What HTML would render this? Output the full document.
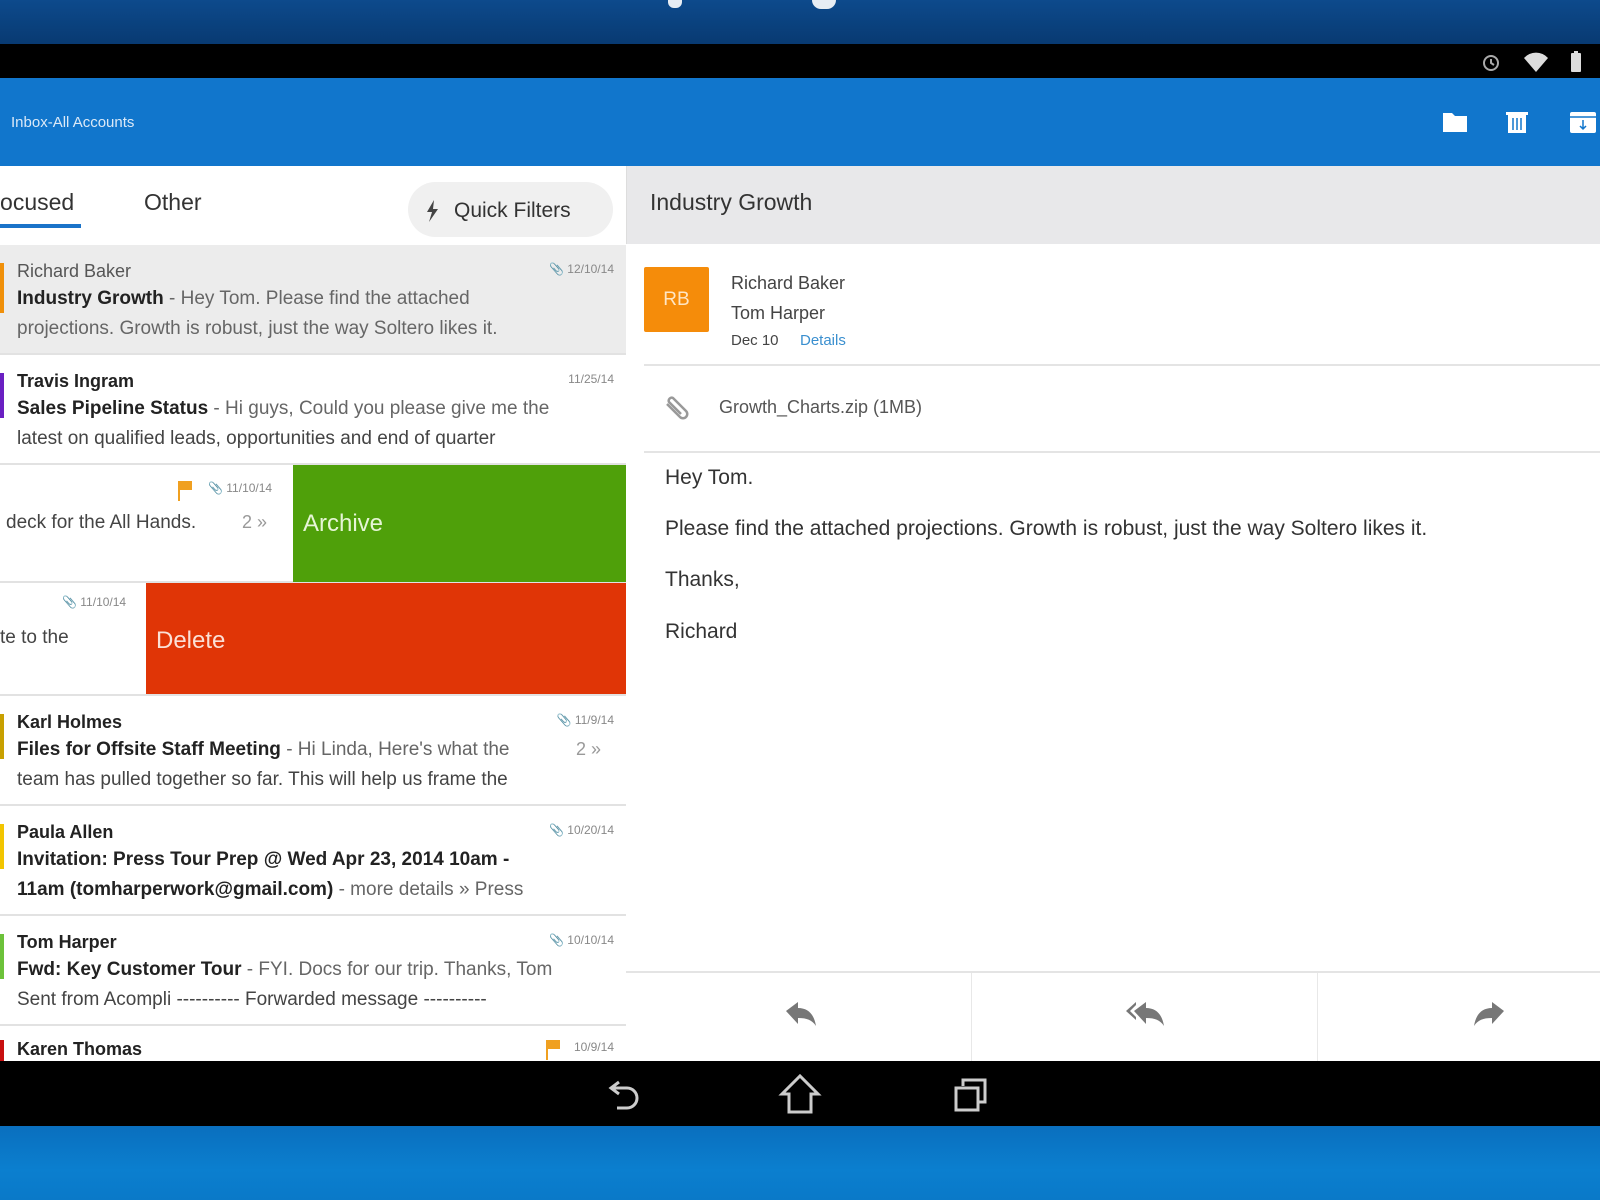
<!DOCTYPE html>
<html><head><meta charset="utf-8"><style>
*{margin:0;padding:0;box-sizing:border-box}
body{width:1600px;height:1200px;overflow:hidden;position:relative;font-family:"Liberation Sans",sans-serif;background:#fff}
.a{position:absolute;white-space:nowrap}
.top{left:0;top:0;width:1600px;height:44px;background:linear-gradient(#0d4a8c,#083a72)}
.sb{left:0;top:44px;width:1600px;height:34px;background:#000}
.tb{left:0;top:78px;width:1600px;height:88px;background:#1176cc}
.nav{left:0;top:1061px;width:1600px;height:65px;background:#000}
.bot{left:0;top:1126px;width:1600px;height:74px;background:linear-gradient(#0a6fbe,#0b7fcf 60%,#0a79c8)}
.row{position:absolute;left:0;width:626px;border-bottom:2px solid #e2e2e2;background:#fff}
.n{position:absolute;left:17px;font-size:18px;color:#222}
.s{position:absolute;left:17px;font-size:19px;color:#666}
.s b{color:#222}
.d{position:absolute;right:12px;font-size:12px;color:#888}
.bar{position:absolute;left:0;width:4px}
</style></head><body>
<div class="a top"></div>
<div class="a" style="left:668px;top:0;width:14px;height:8px;background:#fff;border-radius:0 0 6px 6px;opacity:.9"></div>
<div class="a" style="left:812px;top:0;width:24px;height:9px;background:#fff;border-radius:0 0 10px 10px;opacity:.9"></div>
<div class="a sb"></div>
<svg class="a" style="left:1480px;top:50px" width="110" height="24" viewBox="0 0 110 24">
<circle cx="11" cy="13" r="7" fill="none" stroke="#aaa" stroke-width="2"/><path d="M11 9v4l3 2" stroke="#aaa" stroke-width="2" fill="none"/>
<path d="M44 8a16 16 0 0 1 24 0l-12 14z" fill="#ddd"/>
<rect x="91" y="3" width="10" height="19" rx="1" fill="#ddd"/><rect x="94" y="1" width="4" height="3" fill="#ddd"/>
</svg>
<div class="a tb"></div>
<div class="a" style="left:11px;top:114px;font-size:15px;color:#dbe9f7">Inbox-All Accounts</div>
<svg class="a" style="left:1440px;top:107px" width="160" height="30" viewBox="0 0 160 30">
<path d="M3 6h9l3 3h12v16H3z" fill="#fff"/>
<rect x="68" y="8" width="18" height="18" fill="#fff"/><rect x="66" y="5" width="22" height="3" fill="#fff"/><path d="M73 11v12M77 11v12M81 11v12" stroke="#1176cc" stroke-width="1.5"/>
<rect x="130" y="5" width="26" height="21" rx="2" fill="#fff"/><path d="M130 10h26" stroke="#1176cc" stroke-width="1.5"/><path d="M143 13v9M140 19l3 3 3-3" stroke="#1176cc" stroke-width="1.5" fill="none"/>
</svg>

<div class="a" style="left:0;top:166px;width:626px;height:79px;background:#fff"></div>
<div class="a" style="left:-14px;top:189px;font-size:23px;color:#333">Focused</div>
<div class="a" style="left:0;top:224px;width:81px;height:4px;background:#1a73c9"></div>
<div class="a" style="left:144px;top:189px;font-size:23px;color:#333">Other</div>
<div class="a" style="left:408px;top:182px;width:205px;height:55px;border-radius:28px;background:#f0f0f0"></div>
<svg class="a" style="left:424px;top:199px" width="16" height="24" viewBox="0 0 16 24"><path d="M10 1L3 13h5l-3 10 9-13H9z" fill="#444"/></svg>
<div class="a" style="left:454px;top:199px;font-size:21px;color:#333">Quick Filters</div>

<div class="row" style="top:245px;height:110px;background:#ececec">
<div class="bar" style="top:18px;height:50px;background:#f0900a"></div>
<div class="n" style="top:16px;color:#555">Richard Baker</div>
<div class="d" style="top:17px">📎 12/10/14</div>
<div class="s" style="top:43px"><b>Industry Growth</b> - Hey Tom. Please find the attached</div>
<div class="s" style="top:73px">projections. Growth is robust, just the way Soltero likes it.</div>
</div>
<div class="row" style="top:355px;height:110px">
<div class="bar" style="top:18px;height:45px;background:#6a1fc2"></div>
<div class="n" style="top:16px;font-weight:bold">Travis Ingram</div>
<div class="d" style="top:17px">11/25/14</div>
<div class="s" style="top:43px"><b>Sales Pipeline Status</b> - Hi guys, Could you please give me the</div>
<div class="s" style="top:73px;color:#444">latest on qualified leads, opportunities and end of quarter</div>
</div>
<div class="row" style="top:465px;height:118px">
<div class="a" style="left:177px;top:14px;width:14px;height:18px"><svg width="16" height="22"><path d="M2 2v20" stroke="#f0a020" stroke-width="2"/><path d="M3 2h12v9H3z" fill="#f0a020"/></svg></div>
<div class="a" style="left:208px;top:16px;font-size:12px;color:#888">📎 11/10/14</div>
<div class="a" style="left:6px;top:47px;font-size:19px;color:#444">deck for the All Hands.</div>
<div class="a" style="left:242px;top:47px;font-size:18px;color:#999">2 »</div>
<div class="a" style="left:293px;top:0;width:333px;height:117px;background:#4fa00a"></div>
<div class="a" style="left:303px;top:45px;font-size:24px;color:#e6f5d6">Archive</div>
</div>
<div class="row" style="top:583px;height:113px">
<div class="a" style="left:62px;top:12px;font-size:12px;color:#888">📎 11/10/14</div>
<div class="a" style="left:0;top:44px;font-size:19px;color:#444">te to the</div>
<div class="a" style="left:146px;top:0;width:480px;height:111px;background:#e03506"></div>
<div class="a" style="left:156px;top:44px;font-size:24px;color:#fbe0d6">Delete</div>
</div>
<div class="row" style="top:696px;height:110px">
<div class="bar" style="top:18px;height:45px;background:#c8a000"></div>
<div class="n" style="top:16px;font-weight:bold">Karl Holmes</div>
<div class="d" style="top:17px">📎 11/9/14</div>
<div class="s" style="top:43px"><b>Files for Offsite Staff Meeting</b> - Hi Linda, Here's what the</div>
<div class="a" style="left:576px;top:43px;font-size:18px;color:#999">2 »</div>
<div class="s" style="top:73px;color:#444">team has pulled together so far. This will help us frame the</div>
</div>
<div class="row" style="top:806px;height:110px">
<div class="bar" style="top:18px;height:45px;background:#f2c500"></div>
<div class="n" style="top:16px;font-weight:bold">Paula Allen</div>
<div class="d" style="top:17px">📎 10/20/14</div>
<div class="s" style="top:43px"><b>Invitation: Press Tour Prep @ Wed Apr 23, 2014 10am -</b></div>
<div class="s" style="top:73px"><b>11am (tomharperwork@gmail.com)</b> - more details » Press</div>
</div>
<div class="row" style="top:916px;height:110px">
<div class="bar" style="top:18px;height:45px;background:#6cc23a"></div>
<div class="n" style="top:16px;font-weight:bold">Tom Harper</div>
<div class="d" style="top:17px">📎 10/10/14</div>
<div class="s" style="top:43px"><b>Fwd: Key Customer Tour</b> - FYI. Docs for our trip. Thanks, Tom</div>
<div class="s" style="top:73px;color:#444">Sent from Acompli ---------- Forwarded message ----------</div>
</div>
<div class="row" style="top:1026px;height:35px;border:none">
<div class="bar" style="top:14px;height:21px;background:#c81010"></div>
<div class="n" style="top:13px;font-weight:bold">Karen Thomas</div>
<div class="a" style="left:545px;top:12px"><svg width="16" height="22"><path d="M2 2v20" stroke="#f0a020" stroke-width="2"/><path d="M3 2h12v9H3z" fill="#f0a020"/></svg></div>
<div class="d" style="top:14px">10/9/14</div>
</div>

<div class="a" style="left:626px;top:166px;width:974px;height:78px;background:#e8e8ea;border-left:1px solid #ddd"></div>
<div class="a" style="left:650px;top:189px;font-size:23px;color:#333">Industry Growth</div>
<div class="a" style="left:644px;top:267px;width:65px;height:65px;background:#f58c0a;border-radius:2px;color:#ffe6c4;font-size:19px;text-align:center;line-height:65px">RB</div>
<div class="a" style="left:731px;top:273px;font-size:18px;color:#444">Richard Baker</div>
<div class="a" style="left:731px;top:303px;font-size:18px;color:#444">Tom Harper</div>
<div class="a" style="left:731px;top:332px;font-size:15px;color:#444">Dec 10</div>
<div class="a" style="left:800px;top:332px;font-size:15px;color:#3a8fcf">Details</div>
<div class="a" style="left:644px;top:364px;width:956px;height:2px;background:#e4e4e4"></div>
<svg class="a" style="left:664px;top:396px" width="28" height="26" viewBox="0 0 28 26"><path d="M3 8l13 13a4 4 0 0 0 6-6L9 2a3 3 0 0 0-4 4l12 12" stroke="#999" stroke-width="2.5" fill="none"/></svg>
<div class="a" style="left:719px;top:397px;font-size:18px;color:#555">Growth_Charts.zip (1MB)</div>
<div class="a" style="left:644px;top:451px;width:956px;height:2px;background:#e4e4e4"></div>
<div class="a" style="left:665px;top:466px;font-size:21px;color:#333">Hey Tom.</div>
<div class="a" style="left:665px;top:517px;font-size:21px;color:#333">Please find the attached projections. Growth is robust, just the way Soltero likes it.</div>
<div class="a" style="left:665px;top:568px;font-size:21px;color:#333">Thanks,</div>
<div class="a" style="left:665px;top:620px;font-size:21px;color:#333">Richard</div>
<div class="a" style="left:626px;top:971px;width:974px;height:2px;background:#e4e4e4"></div>
<div class="a" style="left:971px;top:973px;width:1px;height:88px;background:#e8e8e8"></div>
<div class="a" style="left:1317px;top:973px;width:1px;height:88px;background:#e8e8e8"></div>
<svg class="a" style="left:784px;top:1001px" width="36" height="28" viewBox="0 0 36 28"><path d="M2 10l12-9v6c10 0 16 6 18 18-4-6-9-8-18-8v6z" fill="#777"/></svg>
<svg class="a" style="left:1124px;top:1001px" width="44" height="28" viewBox="0 0 44 28"><path d="M2 10l10-9v3L6 10l6 6v3z" fill="#777"/><path d="M10 10l12-9v6c10 0 16 6 18 18-4-6-9-8-18-8v6z" fill="#777"/></svg>
<svg class="a" style="left:1470px;top:1001px" width="36" height="28" viewBox="0 0 36 28"><path d="M34 10L22 1v6C12 7 6 13 4 25c4-6 9-8 18-8v6z" fill="#777"/></svg>

<div class="a nav"></div>
<svg class="a" style="left:605px;top:1074px" width="400" height="40" viewBox="0 0 400 40">
<path d="M14 8l-8 6 8 6M6 14h16a10 10 0 0 1 0 20H12" stroke="#ccc" stroke-width="3" fill="none"/>
<path d="M184 38V20h-7l18-18 18 18h-7v18z" stroke="#ccc" stroke-width="3" fill="none"/>
<rect x="351" y="14" width="22" height="22" stroke="#ccc" stroke-width="3" fill="none"/><path d="M358 12V6h22v22h-6" stroke="#ccc" stroke-width="3" fill="none"/>
</svg>
<div class="a bot"></div>
</body></html>
